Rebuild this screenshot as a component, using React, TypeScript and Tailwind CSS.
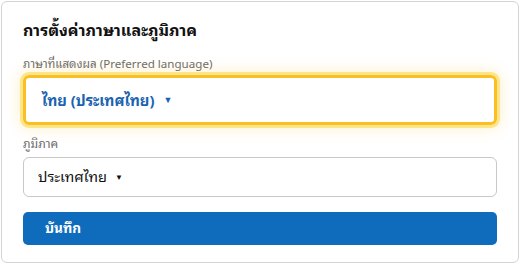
import React from "react";

export default function App() {
  return (
    <div className="p-px bg-white w-[520px] h-[280px]" style={{ fontFamily: '"Noto Sans", "Noto Sans Thai Looped", sans-serif' }}>
      <div className="w-[518px] h-[262px] border border-[#d4d4d4] rounded-md bg-white px-[21px] pt-4 flex flex-col">
        <div className="text-[16px] font-bold leading-6 text-[#111]">การตั้งค่าภาษาและภูมิภาค</div>
        <div className="mt-[14px] text-[11.6px] leading-4 text-[#6b6b6b]">ภาษาที่แสดงผล (Preferred language)</div>
        <div className="mt-[3px] h-[50px] border-[3px] border-[#fbbf24] rounded-md flex items-center pl-4 shadow-[0_0_0_3px_#fde68a,0_0_14px_4px_rgba(251,191,36,0.22)]">
          <span className="text-[14.8px] font-bold text-[#1b63b0]">ไทย (ประเทศไทย)</span>
          <span className="ml-[9px] text-[9px] text-[#1b63b0]">▼</span>
        </div>
        <div className="mt-[11px] text-[12px] leading-4 text-[#6b6b6b]">ภูมิภาค</div>
        <div className="mt-[5px] h-[40px] border border-[#c8c8c8] rounded-md flex items-center pl-[14px]">
          <span className="text-[14.6px] text-[#111]">ประเทศไทย</span>
          <span className="ml-[8px] text-[8px] text-[#111]">▼</span>
        </div>
        <div className="mt-[15px] h-[33px] rounded-[5px] bg-[#0f6cbd] flex items-center pl-[22px]">
          <span className="text-[13.6px] font-bold text-white">บันทึก</span>
        </div>
      </div>
    </div>
  );
}
